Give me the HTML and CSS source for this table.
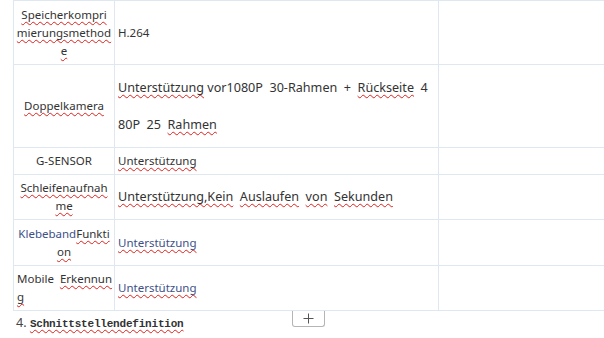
FILE: index.html
```html
<!DOCTYPE html>
<html lang="de">
<head>
<meta charset="utf-8">
<title>Spezifikation</title>
<link rel="stylesheet" href="styles.css">
</head>
<body>
<div class="doc">
  <div class="spec-table">
    <div class="cell label"><span class="spell">Speicherkompri<br>mierungsmethod<br>e</span></div>
    <div class="cell value">H.264</div>
    <div class="cell blank"></div>

    <div class="cell label"><span class="spell">Doppelkamera</span></div>
    <div class="cell value tall big"><span><span class="spell">Unterstützung</span> vor1080P  30-Rahmen  +  <span class="spell">Rückseite</span>  4<br>80P  25  <span class="spell">Rahmen</span></span></div>
    <div class="cell blank"></div>

    <div class="cell label">G-SENSOR</div>
    <div class="cell value"><span class="spell">Unterstützung</span></div>
    <div class="cell blank"></div>

    <div class="cell label"><span class="spell">Schleifenaufnah<br>me</span></div>
    <div class="cell value big"><span><span class="spell">Unterstützung,Kein</span>  <span class="spell">Auslaufen</span>  <span class="spell">von</span>  <span class="spell">Sekunden</span></span></div>
    <div class="cell blank"></div>

    <div class="cell label"><span><span class="link">Klebeband</span><span class="spell">Funkti</span><br><span class="spell">on</span></span></div>
    <div class="cell value link"><span class="spell">Unterstützung</span></div>
    <div class="cell blank"></div>

    <div class="cell label left"><span>Mobile  <span class="spell">Erkennun</span><br><span class="spell">g</span></span></div>
    <div class="cell value link"><span class="spell">Unterstützung</span></div>
    <div class="cell blank"></div>
  </div>

  <p class="section-title"><span class="num">4.</span> <span class="title-text spell">Schnittstellendefinition</span></p>

  <button class="add-row" type="button" aria-label="Zeile hinzufügen">
    <svg width="11" height="11" viewBox="0 0 11 11"><path d="M5.5 0.5v10M0.5 5.5h10" stroke="#555" stroke-width="1" fill="none"/></svg>
  </button>
</div>
</body>
</html>
```
FILE: styles.css
```css
html, body {
  margin: 0;
  padding: 0;
  overflow: hidden;
  background: #fff;
}

body {
  font-family: "Noto Sans", "Open Sans", sans-serif;
  font-size: 11.5px;
  color: #333;
}

.doc {
  position: relative;
  padding-left: 13px;
  width: 591px;
  height: 338px;
  overflow: hidden;
}

.spec-table {
  display: grid;
  grid-template-columns: 101px 324px 220px;
  grid-template-rows: 64px 83px 27px 45px 46px 45px;
  width: max-content;
  border-top: 1px solid #dfe7f0;
  border-left: 1px solid #dfe7f0;
}

.cell {
  box-sizing: border-box;
  display: flex;
  align-items: center;
  padding: 0 3px;
  border-right: 1px solid #dfe7f0;
  border-bottom: 1px solid #dfe7f0;
  line-height: 18px;
  white-space: pre;
}

.label {
  justify-content: center;
  text-align: center;
}

.label.left {
  justify-content: flex-start;
  text-align: left;
}

.value.big {
  font-size: 12.6px;
}

.value.tall {
  line-height: 37px;
}

.blank {
  border-right: none;
}

.spell {
  text-decoration: underline wavy #e0201b;
  text-decoration-thickness: 1px;
  text-underline-offset: 2px;
  text-decoration-skip-ink: none;
}

.link {
  color: #3d5088;
}

.section-title {
  margin: 0;
  padding-left: 3px;
  height: 24px;
  line-height: 24px;
  white-space: pre;
  font-size: 12.6px;
}

.num {
  color: #444;
}

.title-text {
  font-family: "Liberation Mono", "Courier New", monospace;
  font-weight: bold;
  font-size: 11px;
  letter-spacing: -0.2px;
  color: #333;
}

.add-row {
  position: absolute;
  left: 292px;
  top: 311px;
  width: 33px;
  height: 16px;
  padding: 0;
  margin: 0;
  display: flex;
  align-items: center;
  justify-content: center;
  background: #fff;
  border: 1px solid #b5b5b5;
  border-top: none;
  border-radius: 0 0 3px 3px;
}
```
